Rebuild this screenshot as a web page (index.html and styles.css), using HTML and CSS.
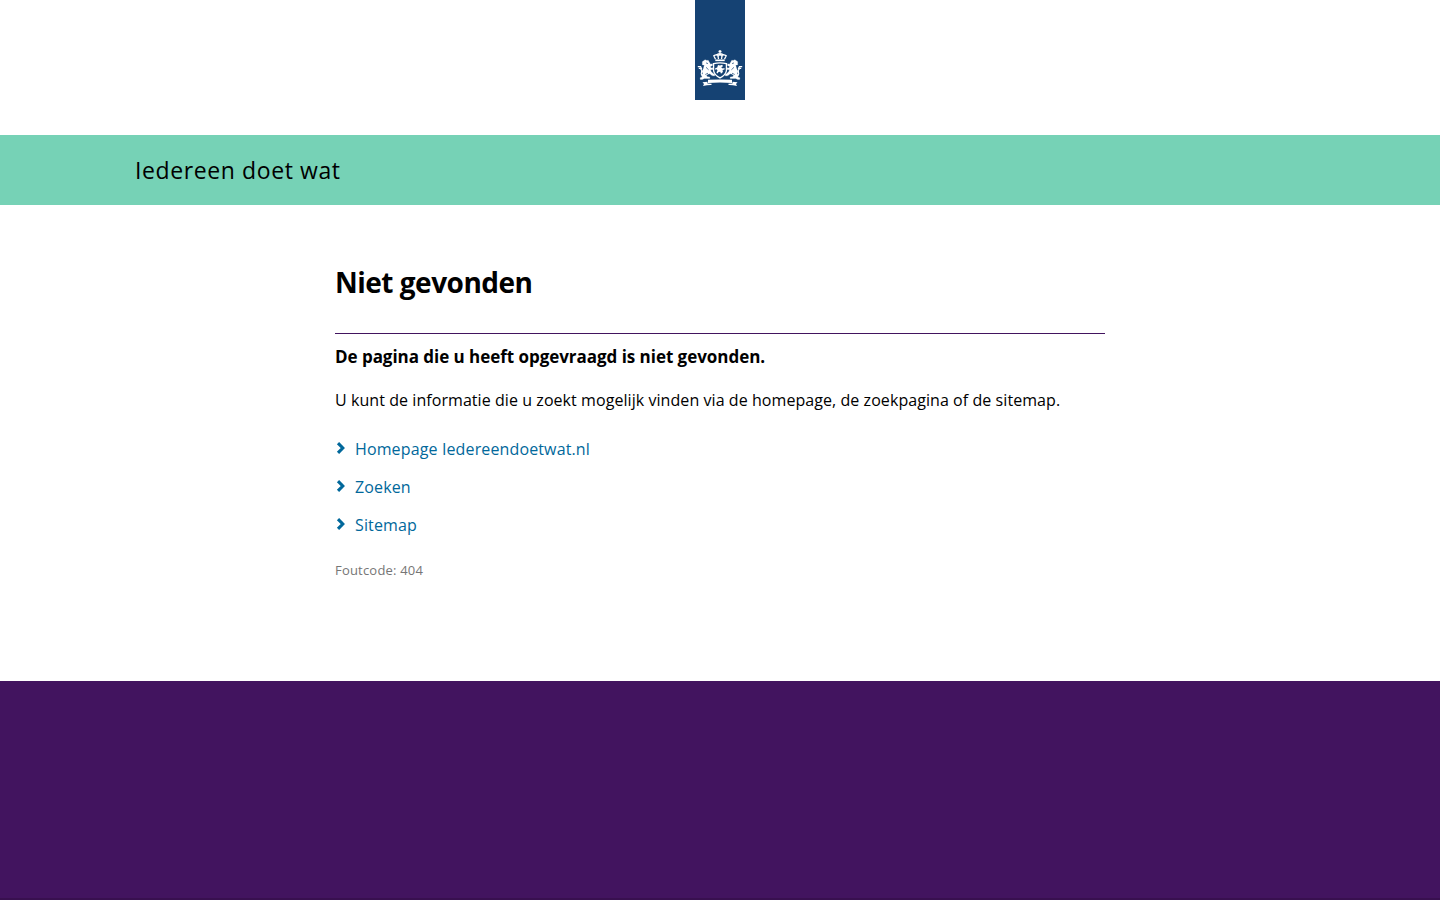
FILE: index.html
```
<!DOCTYPE html>
<html lang="nl">
<head>
<meta charset="utf-8">
<title>Niet gevonden | Iedereen doet wat</title>
<link rel="stylesheet" href="styles.css">
</head>
<body>
<header class="logo-bar">
<svg class="logo" viewBox="0 0 50 100" role="img" aria-label="Rijksoverheid">
<path fill="#154273" d="M0 0h50v100H0z"/>
<g fill="none" stroke="#fff" stroke-width="1.3">
<path d="M25 50v4M23.500 51.500h3M20.500 59.200l-1.700-3.500q3-2 4.200.6 2-3 4 0 1.200-2.600 4.200-.6l-1.700 3.500M21.500 55q3.500-2.500 7 0M23 56l.5 3M27 56l-.5 3"/>
<path stroke-width="1.700" d="M20.300 60.300h9.400"/>
<path stroke-width="1.300" d="M18.600 63.600q6.400-1.600 12.800 0v7.200q-1 4.400-6.400 7.100-5.400-2.700-6.400-7.100z"/>
</g>
<path fill="#fff" d="M23 65l2 .6 2.200-.8.8 1.500-1.800 1 1.500 1.200 1.800-.6v1.700l-1.900.5.300 1.800-1.900 1.900-.8-2.100-1.700.2-.8 1.500-1.300-1 1.100-1.800-.8-1.300-1.500.5v-1.500l2-.8z"/>
<g id="lion">
<path fill="#fff" stroke="#fff" stroke-width=".25" d="M7.300 61.700l2.800-2 1.800.8 1.300-.3 1.300 2.200 1 1.800 1.900-.5.100 1.900-2.100.9.600 1.500 1.800-.2.200 1.600-2.500.3.600 1.900 2 1.800 1.700.9-.3 1.600-2.500-.3-2.200-1.800-2 .5-1.400 1.400 1 1 2.400.3v1.500h-5.500l-2 1H5.300l-.2-1.700 2.200-.7-.9-1.500 1.400-2.200-.8-1.800 1.400-3 .9-3.500-1.900-.2z"/>
<path fill="none" stroke="#fff" stroke-width="1.200" d="M8.500 76q-3-1.200-2-3.600t-1-3.400M2.800 66.700h2.800l1.200 2.300M3.800 68.300h2"/>
<path fill="none" stroke="#154273" stroke-width=".7" d="M11 62.900l2 .7M11 67.300l2.600 2.500M10.300 74.500l2.700-1.300"/>
</g>
<use href="#lion" transform="matrix(-1 0 0 1 50 0)"/>
<path fill="#fff" d="M13 79.800q12-.7 24 0v3.100q-12-.8-24 0zM7.500 82.300l5-.6v1.700l4 .3v1.400q-4-.1-8.500.9l1-1.900zM42.500 82.300l-5-.6v1.700l-4 .3v1.400q4-.1 8.500.9l-1-1.900z"/>
</svg>
</header>
<div class="site-bar"><p class="site-name">Iedereen doet wat</p></div>
<main class="content">
<h1 class="title">Niet gevonden</h1>
<p class="lead">De pagina die u heeft opgevraagd is niet gevonden.</p>
<p class="intro">U kunt de informatie die u zoekt mogelijk vinden via de homepage, de zoekpagina of de sitemap.</p>
<ul class="links">
<li><svg class="chevron" viewBox="0 0 10 14"><path d="M2 2.100L6.800 7 2 11.900"/></svg><a href="#">Homepage Iedereendoetwat.nl</a></li>
<li><svg class="chevron" viewBox="0 0 10 14"><path d="M2 2.100L6.800 7 2 11.900"/></svg><a href="#">Zoeken</a></li>
<li><svg class="chevron" viewBox="0 0 10 14"><path d="M2 2.100L6.800 7 2 11.900"/></svg><a href="#">Sitemap</a></li>
</ul>
<p class="code">Foutcode: 404</p>
</main>
<footer class="footer"></footer>
</body>
</html>
```
FILE: styles.css
```
* { box-sizing: border-box; margin: 0; padding: 0; }
body { height: 900px; display: flex; flex-direction: column; overflow: hidden; background: #fff; color: #000; font-family: "Open Sans", "Noto Sans", sans-serif; }
.logo-bar { height: 135px; display: flex; justify-content: center; align-items: flex-start; }
.logo { width: 50px; height: 100px; display: block; }
.site-bar { height: 70px; background: #76d2b6; padding: 0 135px; }
.site-name { font-size: 23px; line-height: 70px; letter-spacing: .6px; }
.content { width: 770px; height: 476px; margin: 0 auto; padding-top: 59px; }
.title { font-size: 28px; line-height: 36px; height: 70px; font-weight: 700; letter-spacing: -.5px; border-bottom: 1px solid #42145f; }
.lead { margin-top: 11px; font-size: 17px; line-height: 24px; font-weight: 700; letter-spacing: -.04px; }
.intro { margin-top: 18px; font-size: 16px; line-height: 26px; letter-spacing: .065px; white-space: nowrap; }
.links { list-style: none; margin-top: 22px; color: #01689b; }
.links li { display: flex; align-items: center; gap: 9px; height: 26px; margin-bottom: 12px; font-size: 16px; letter-spacing: .13px; }
.links a { color: inherit; text-decoration: none; padding-top: 2px; }
.chevron { width: 10px; height: 14px; margin-left: 1px; fill: none; stroke: #01689b; stroke-width: 3.1; }
.code { margin-top: 23px; font-size: 13px; line-height: 20px; letter-spacing: .2px; color: #767676; }
.footer { flex: 1; background: #42145f; border-bottom: 2px solid #38104f; }
```
